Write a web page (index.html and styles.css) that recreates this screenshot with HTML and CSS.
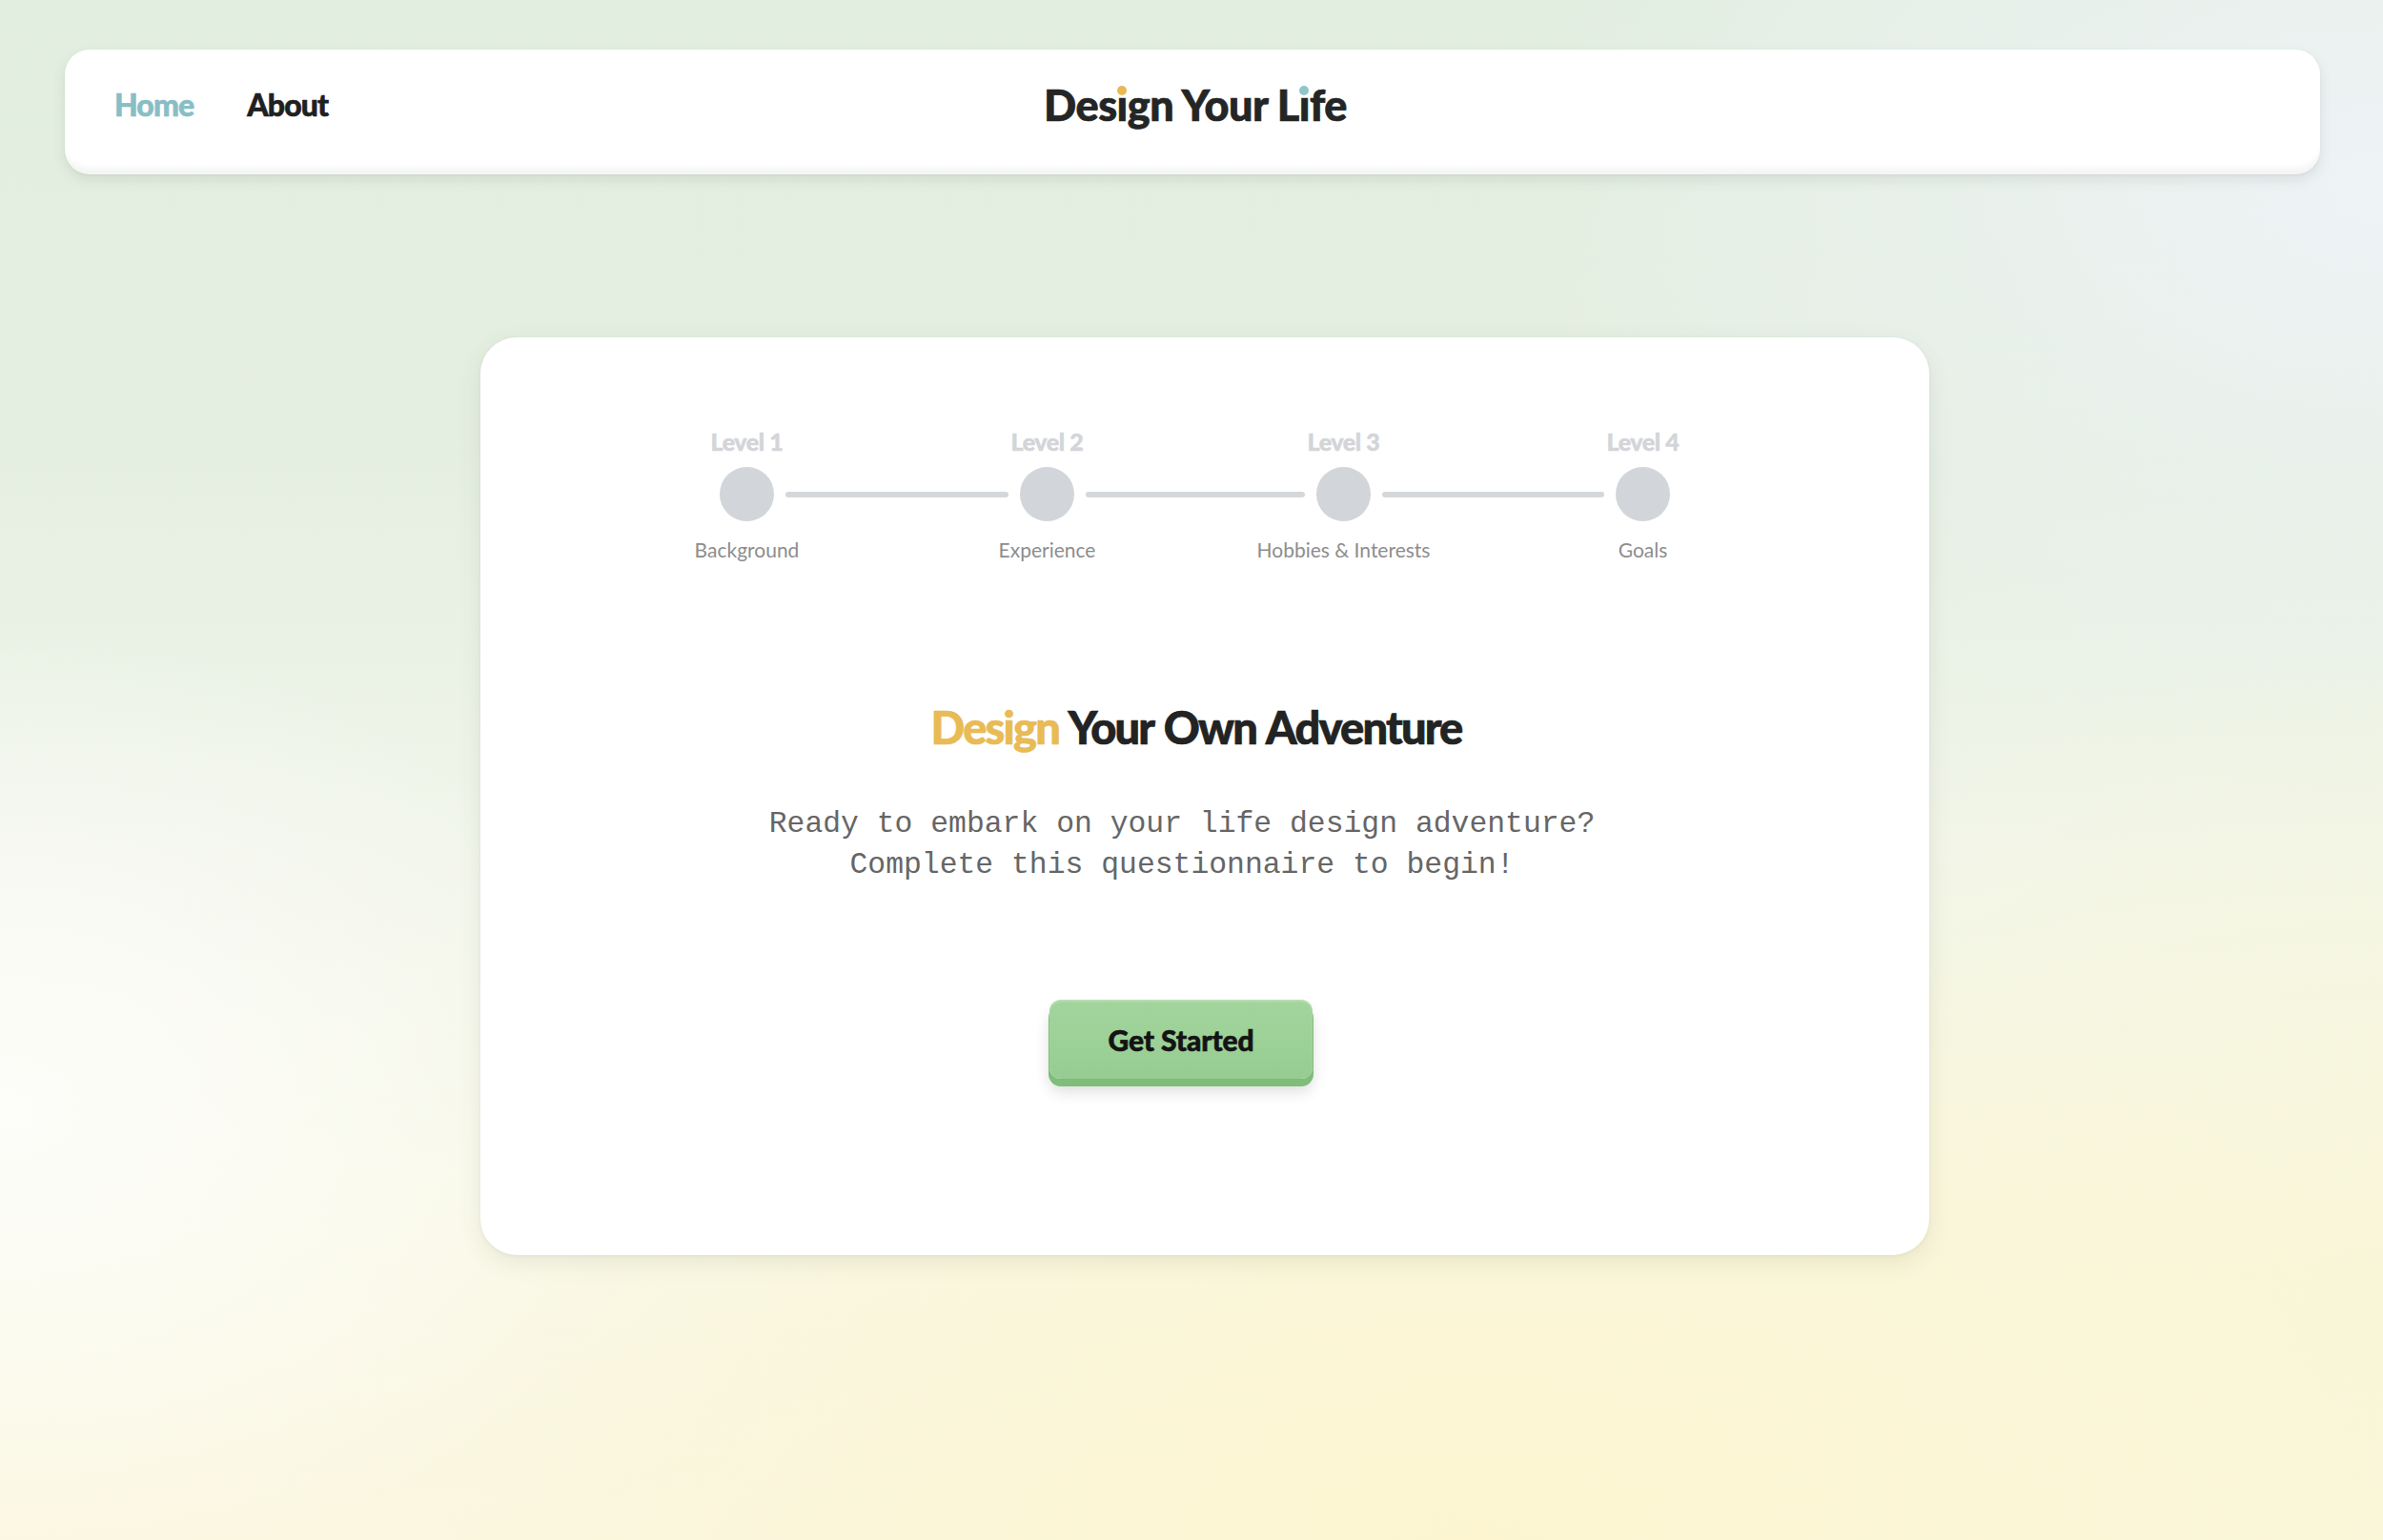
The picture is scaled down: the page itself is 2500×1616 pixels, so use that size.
FILE: index.html
```html
<!DOCTYPE html>
<html lang="en">
<head>
<meta charset="utf-8">
<title>Design Your Life</title>
<link rel="stylesheet" href="styles.css">
</head>
<body>
<header class="nav">
  <nav class="nav-links">
    <a class="nav-link nav-link-active" href="#">Home</a>
    <a class="nav-link" href="#">About</a>
  </nav>
  <div class="brand">Des<span class="idot idot-gold">ı</span>gn Your L<span class="idot idot-teal">ı</span>fe</div>
  <div class="nav-spacer"></div>
</header>

<main class="card">
  <div class="stepper">
    <div class="step-level c1">Level 1</div>
    <div class="step-level c3">Level 2</div>
    <div class="step-level c5">Level 3</div>
    <div class="step-level c7">Level 4</div>

    <div class="step-dot c1"></div>
    <div class="step-line c2"></div>
    <div class="step-dot c3"></div>
    <div class="step-line c4"></div>
    <div class="step-dot c5"></div>
    <div class="step-line c6"></div>
    <div class="step-dot c7"></div>

    <div class="step-name c1">Background</div>
    <div class="step-name c3">Experience</div>
    <div class="step-name c5">Hobbies &amp; Interests</div>
    <div class="step-name c7">Goals</div>
  </div>

  <h1 class="headline"><span class="accent">Design</span> Your Own Adventure</h1>
  <p class="intro">Ready to embark on your life design adventure?<br>Complete this questionnaire to begin!</p>
  <button class="start-btn" type="button">Get Started</button>
</main>
</body>
</html>
```

FILE: styles.css
```css
html {
  background: #f1f5ec;
}
body {
  margin: 0;
  min-height: 1616px;
  box-sizing: border-box;
  padding: 52px 66px 0 68px;
  font-family: Lato, "Noto Sans", sans-serif;
  background-color: #f3f6ee;
  background-image:
    radial-gradient(ellipse 1100px 700px at 62% 100%, rgba(252, 245, 208, 1) 0%, rgba(252, 245, 208, 0) 100%),
    radial-gradient(ellipse 900px 700px at 100% 85%, rgba(248, 245, 214, 0.9) 0%, rgba(248, 245, 214, 0) 100%),
    radial-gradient(ellipse 700px 500px at 0% 72%, rgba(253, 253, 250, 1) 0%, rgba(253, 253, 250, 0) 100%),
    radial-gradient(ellipse 900px 600px at 100% 12%, rgba(238, 243, 246, 1) 0%, rgba(238, 243, 246, 0) 100%),
    linear-gradient(180deg, #e2eee0 0%, #e5efe1 30%, #f1f5ea 55%, #f9f8e6 80%, #fbf7e0 100%);
}

/* ---------- NAV ---------- */
.nav {
  height: 131px;
  box-sizing: border-box;
  padding: 0 52px 16px 52px;
  display: grid;
  grid-template-columns: 1fr auto 1fr;
  align-items: center;
  background: #ffffff;
  border-radius: 26px;
  box-shadow:
    inset 0 -12px 6px -5px rgba(0, 0, 0, 0.045),
    0 6px 14px rgba(60, 80, 60, 0.11),
    0 1px 3px rgba(0, 0, 0, 0.05);
}
.nav-links {
  display: flex;
  gap: 56px;
}
.nav-link {
  font-size: 32px;
  font-weight: 900;
  color: #1f2020;
  text-decoration: none;
  letter-spacing: -0.9px;
  -webkit-text-stroke: 0.6px currentColor;
}
.nav-link-active {
  color: #88bec6;
}
.brand {
  font-size: 45px;
  font-weight: 900;
  color: #242525;
  letter-spacing: -0.5px;
  padding-left: 6px;
  -webkit-text-stroke: 0.7px currentColor;
}
.idot {
  position: relative;
}
.idot::after {
  content: "";
  position: absolute;
  left: 50%;
  top: 0.17em;
  width: 10px;
  height: 10px;
  margin-left: -5px;
  border-radius: 50%;
}
.idot-gold::after { background: #e8b954; }
.idot-teal::after { background: #8fc6ca; }

/* ---------- CARD ---------- */
.card {
  width: 1520px;
  height: 963px;
  box-sizing: border-box;
  margin: 171px 0 0 436px;
  padding: 94px 28px 0 0;
  background: #ffffff;
  border-radius: 38px;
  box-shadow: 0 8px 24px rgba(80, 90, 60, 0.10), 0 1px 4px rgba(0, 0, 0, 0.05);
  display: flex;
  flex-direction: column;
  align-items: center;
}

.stepper {
  display: grid;
  grid-template-columns: 57px 258px 57px 254px 57px 257px 57px;
  grid-template-rows: 30px 57px 25px;
  row-gap: 12px;
  margin-left: 7px;
}
.stepper .step-name { margin-top: 5px; }
.c1 { grid-column: 1; }
.c2 { grid-column: 2; }
.c3 { grid-column: 3; }
.c4 { grid-column: 4; }
.c5 { grid-column: 5; }
.c6 { grid-column: 6; }
.c7 { grid-column: 7; }

.step-level {
  grid-row: 1;
  justify-self: center;
  white-space: nowrap;
  font-size: 25px;
  line-height: 30px;
  font-weight: 900;
  color: #d3d5d8;
  letter-spacing: -0.4px;
  -webkit-text-stroke: 0.5px currentColor;
}
.step-dot {
  grid-row: 2;
  width: 57px;
  height: 57px;
  border-radius: 50%;
  background: #d2d5d9;
}
.step-line {
  grid-row: 2;
  align-self: center;
  height: 6px;
  margin: 0 12px;
  border-radius: 3px;
  background: #d5d8db;
}
.step-name {
  grid-row: 3;
  justify-self: center;
  white-space: nowrap;
  font-size: 21px;
  line-height: 25px;
  color: #8d8d8d;
}

.headline {
  margin: 150px 0 0 10px;
  font-size: 47px;
  line-height: 58px;
  font-weight: 900;
  color: #222323;
  letter-spacing: -1.8px;
  word-spacing: 2px;
  -webkit-text-stroke: 0.7px currentColor;
}
.accent {
  color: #e8bb55;
}

.intro {
  margin: 51px 20px 0 0;
  font-family: "Liberation Mono", "DejaVu Sans Mono", monospace;
  font-size: 31.4px;
  line-height: 43px;
  color: #666666;
  text-align: center;
}

.start-btn {
  margin: 120px 22px 0 0;
  width: 276px;
  height: 83px;
  border: none;
  border-radius: 12px;
  font-family: Lato, "Noto Sans", sans-serif;
  font-size: 30px;
  font-weight: 900;
  color: #141414;
  letter-spacing: -0.1px;
  -webkit-text-stroke: 0.6px currentColor;
  background: linear-gradient(180deg, #a2d59d 0%, #9bd096 60%, #96cc91 100%);
  box-shadow:
    inset 0 2px 2px rgba(255, 255, 255, 0.25),
    0 7px 0 1px #7ebd7a,
    0 13px 16px rgba(0, 0, 0, 0.14);
  cursor: pointer;
}
```
